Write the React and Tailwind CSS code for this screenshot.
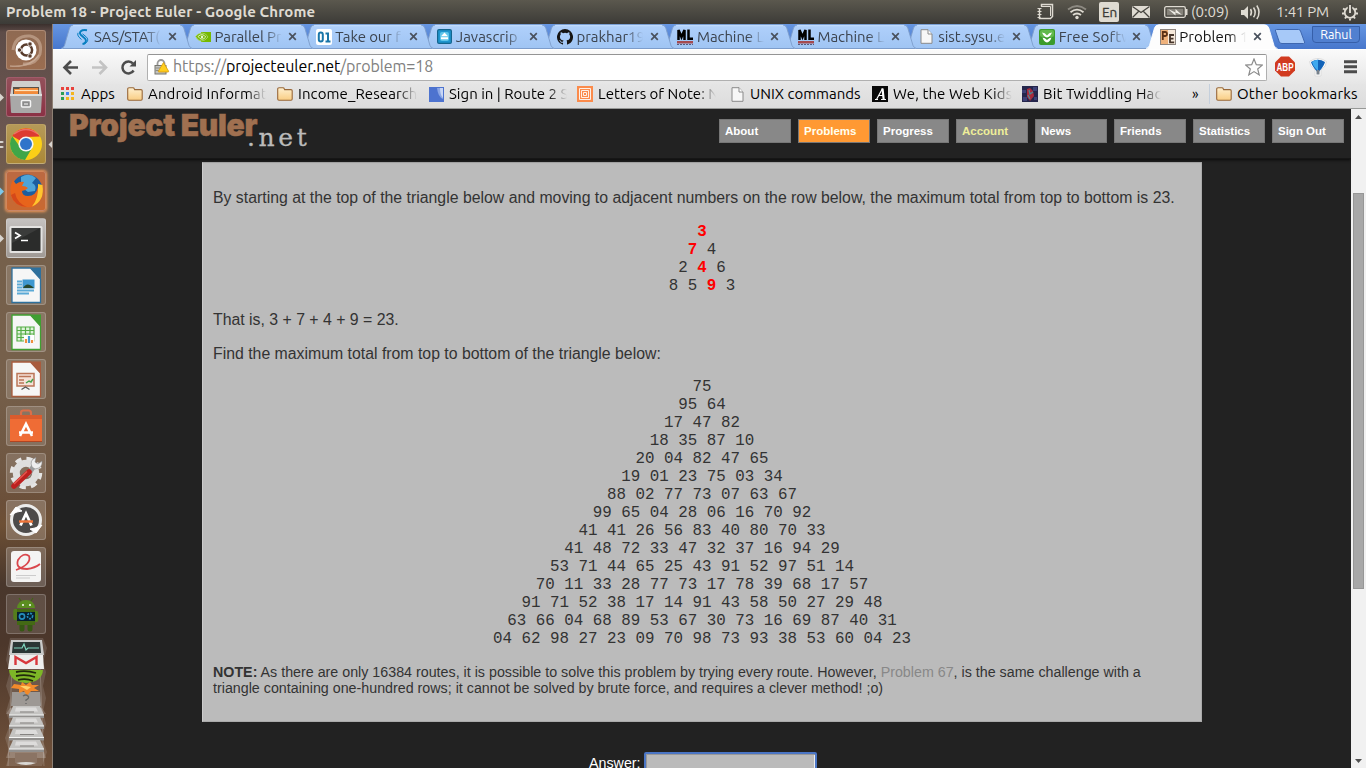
import React from "react";

const uiFont = "font-['Ubuntu','Noto_Sans',sans-serif]";

/* ---------- small drawings ---------- */

const Folder = () => (
  <svg width="16" height="14" viewBox="0 0 16 14" className="shrink-0">
    <defs>
      <linearGradient id="fold" x1="0" y1="0" x2="0" y2="1">
        <stop offset="0" stopColor="#fff0cf" />
        <stop offset="1" stopColor="#f9cd83" />
      </linearGradient>
    </defs>
    <path d="M.7 12V2Q.7 .8 2 .8h4Q7 .8 7.200 1.600L7.600 2.600H14Q15.200 2.600 15.200 3.800V12Q15.200 13.200 14 13.200H2Q.7 13.200 .7 12Z" fill="url(#fold)" stroke="#98683a" strokeWidth="1.100" />
  </svg>
);

const Doc = () => (
  <svg width="13" height="15" viewBox="0 0 13 15" className="shrink-0">
    <path d="M1 .7h7L12 5v9.300H1z" fill="#f7f7f7" stroke="#8a8a8a" />
    <path d="M8 .7V5h4" fill="#fff" stroke="#8a8a8a" />
  </svg>
);

const MlIcon = () => (
  <svg width="16" height="16" viewBox="0 0 16 16">
    <path d="M1.500 11V1l3 7 3-7v10M11.500 .5v9.300h4.500" fill="none" stroke="#000" strokeWidth="2.500" />
    <path d="M0 12h16v2.500H0z" fill="#a44a50" />
    <path d="M0 15.500h16" stroke="#555c80" strokeDasharray="2 1" />
  </svg>
);

const tabIcons = {
  sas: (
    <svg width="14" height="16" viewBox="0 0 14 16">
      <path d="M11 1.200C5 .2 2.500 3.300 5 6L9 9.600C11 12 9.500 14.500 6.500 15" fill="none" stroke="#087fc1" strokeWidth="1.900" />
      <path d="M6.500 4.800 10.500 8.200C13 10.500 11.500 14 7.500 15.200M5.500 10.500 3 8.200Q1 6 2 3.800" fill="none" stroke="#087fc1" strokeWidth="1" />
    </svg>
  ),
  nvidia: (
    <svg width="16" height="12" viewBox="0 0 16 12">
      <path d="M6 1h10v10H6z" fill="#76b900" />
      <path d="M.5 5.500Q3 2 7 2T13 6Q10 10 6.500 10T.5 5.500Z" fill="#76b900" stroke="#b7dc8a" strokeWidth=".7" />
      <path d="M3 5.500Q5 3.500 7.200 3.700T10.700 6Q9 8.200 7 8.200T3 5.500Z" fill="none" stroke="#e6f4d6" strokeWidth=".9" />
      <circle cx="7" cy="6" r="1.200" fill="#e6f4d6" />
    </svg>
  ),
  take: (
    <svg width="16" height="16" viewBox="0 0 16 16">
      <rect width="16" height="16" rx="2" fill="#fff" />
      <rect x="2.800" y="3.500" width="4" height="9" rx="2" fill="none" stroke="#1a76a8" strokeWidth="2" />
      <path d="M9.500 4.500h2.500v8M9.500 12.600h5" fill="none" stroke="#1a76a8" strokeWidth="2" />
    </svg>
  ),
  js: (
    <svg width="15" height="15" viewBox="0 0 15 15">
      <rect x=".6" y=".6" width="13.800" height="13.800" rx="1.500" fill="#1e95ce" stroke="#14658f" strokeWidth="1.200" />
      <rect x="3" y="3" width="9" height="9" rx="2" fill="#5ec4ea" />
      <path d="M7.500 3.600 11 7.200H4zM4 8.200h7v2H4z" fill="#fff" />
    </svg>
  ),
  github: (
    <svg width="16" height="16" viewBox="0 0 16 16">
      <path fill="#161514" d="M8 0a8 8 0 0 0-2.530 15.590c.4.070.55-.17.55-.38v-1.490c-2.230.48-2.690-.94-2.690-.94-.36-.92-.89-1.170-.89-1.170-.73-.5.050-.49.050-.49.810.060 1.230.83 1.230.83.72 1.230 1.880.87 2.330.66.070-.52.280-.87.510-1.070-1.780-.2-3.640-.89-3.640-3.950 0-.87.310-1.590.82-2.150-.08-.2-.36-1.020.08-2.120 0 0 .67-.21 2.200.82a7.600 7.600 0 0 1 4 0c1.530-1.040 2.200-.82 2.200-.82.44 1.100.16 1.920.08 2.120.51.56.82 1.270.82 2.150 0 3.070-1.870 3.750-3.650 3.950.29.25.54.73.54 1.480v2.190c0 .21.150.46.55.38A8 8 0 0 0 8 0Z" />
    </svg>
  ),
  ml: <MlIcon />,
  doc: <Doc />,
  free: (
    <svg width="16" height="16" viewBox="0 0 16 16">
      <rect width="16" height="16" rx="2" fill="#3b9b2c" />
      <rect x="1" y="1" width="14" height="7" rx="2" fill="#62b94d" />
      <path d="M3 3.500Q6 3.500 8 6.500 10 3.500 13 3.500 11 8 8 8.500 5 8 3 3.500ZM3.500 8.500Q6 8.700 8 11 10 8.700 12.500 8.500 11 13 8 13.500 5 13 3.500 8.500Z" fill="#fff" />
    </svg>
  ),
  pe: (
    <svg width="16" height="16" viewBox="0 0 16 16">
      <rect x=".5" y=".5" width="15" height="15" fill="#f7e9da" stroke="#8e8580" />
      <path d="M1 1h7v14H1z" fill="#efb27c" />
      <path d="M2.800 11V3h2.500Q7 3 7 5T5.300 7H3" fill="none" stroke="#5b3116" strokeWidth="1.800" />
      <path d="M14 6H10v7.300h4.200M10 9.600h3.500" fill="none" stroke="#46352b" strokeWidth="1.800" />
    </svg>
  ),
};

const tabs = [
  ["sas", "SAS/STAT(", "tracking-[-0.3px]"],
  ["nvidia", "Parallel Pr", "tracking-[-0.1px]"],
  ["take", "Take our f", "tracking-[-0.1px]"],
  ["js", "Javascrip", "tracking-[0px]"],
  ["github", "prakhar19", "tracking-[0px]"],
  ["ml", "Machine L", "tracking-[-0.1px]"],
  ["ml", "Machine L", "tracking-[-0.1px]"],
  ["doc", "sist.sysu.e", "tracking-[0px]"],
  ["free", "Free Softw", "tracking-[0.1px]"],
  ["pe", "Problem 1", "tracking-[0px]"],
];

const tabLayers = ["z-[10]", "z-[9]", "z-[8]", "z-[7]", "z-[6]", "z-[5]", "z-[4]", "z-[3]", "z-[2]", "z-[20]"];

function Tab({ icon, title, track, index }) {
  const active = index === 9;
  return (
    <div className={`relative h-[25px] w-[120.6px] shrink-0 ${tabLayers[index]}`}>
      <svg className="absolute top-0 left-0 overflow-visible" width="132" height="25" viewBox="0 0 132 25">
        <defs>
          <linearGradient id="tabg" x1="0" y1="0" x2="0" y2="1">
            <stop offset="0" stopColor="#b0d0fb" />
            <stop offset="1" stopColor="#9fc4f3" />
          </linearGradient>
        </defs>
        <path
          d="M0 25Q2.500 24 3.500 21.500L8.500 4Q9.700 .8 13 .8H118.500Q121.500 .8 122.800 4L128 21.500Q129 24 131.500 25Z"
          fill={active ? "#fdfdfd" : "url(#tabg)"}
        />
        <path
          d="M0 24.500Q2.500 24 3.500 21.500L8.500 4Q9.700 .8 13 .8H118.500Q121.500 .8 122.800 4L128 21.500Q129 24 131.500 24.500"
          fill="none"
          stroke={active ? "#fff" : "#7d9dcb"}
          strokeWidth=".9"
        />
        {!active && <path d="M12 1.700H119" stroke="#c8e0ff" />}
        {!active && <path d="M2 24.500H130" stroke="#7d9dcb" />}
      </svg>
      <div className="relative flex h-[25px] items-center pl-[13px]">
        <div className="flex w-[17px] shrink-0 justify-center">{tabIcons[icon]}</div>
        <div className={`ml-[3px] w-[67px] whitespace-nowrap text-[15px] leading-[24px] ${track} ${active ? "text-[#111]" : "text-[#3c444f]"} [mask-image:linear-gradient(to_right,black_75%,transparent)]`}>
          {title}
        </div>
        <svg width="9" height="9" viewBox="0 0 9 9" className="ml-[6.500px] shrink-0">
          <path d="M1.200 1.200l6.600 6.600M7.800 1.200l-6.600 6.600" stroke="#4a525e" strokeWidth="1.700" />
        </svg>
      </div>
    </div>
  );
}

/* ---------- system panel ---------- */

function TopBar() {
  return (
    <div className="flex h-6 shrink-0 items-center bg-linear-to-b from-[#5b584e] to-[#3c3b37] pl-[6px] text-[#dfdbd2]">
      <div className="text-[15px] leading-6 font-bold tracking-[0.1px] whitespace-nowrap">Problem 18 - Project Euler - Google Chrome</div>
      <div className="ml-auto flex h-6 items-center">
        <svg width="329" height="24" viewBox="1037 0 329 24" fill="none" stroke="#dfdbd2">
          <path d="M1039.500 8V18.500H1050.500M1041.500 6.500V4.500H1052.500V16.500L1050 19" strokeWidth="1.500" />
          <path d="M1037.500 8.500h4M1037.500 11.500h4M1037.500 14.500h4M1037.500 17.500h3M1041 6.500h9.500V16" strokeWidth="1" />
          <path d="M1068 9.500q9-7 18 0" stroke="#8d8a82" strokeWidth="1.800" />
          <path d="M1070.500 12.200q6.500-5 13 0M1073 15q4-3 8 0" strokeWidth="1.800" />
          <circle cx="1077" cy="17.500" r="1.700" fill="#dfdbd2" stroke="none" />
          <rect x="1099" y="2" width="20" height="20" rx="2" fill="#dfdbd2" stroke="none" />
          <rect x="1132" y="6" width="18" height="12" fill="#dfdbd2" stroke="none" />
          <path d="M1132.500 6.500l8.500 6 8.500-6M1132.500 17.500l6-6M1149.500 17.500l-6-6" stroke="#45433d" strokeWidth="1.300" />
          <rect x="1164.700" y="6.700" width="20.600" height="10.600" rx="1.500" strokeWidth="1.300" />
          <rect x="1166.800" y="8.700" width="16.500" height="6.600" fill="#86837b" stroke="none" />
          <path d="M1186.500 9v6" strokeWidth="2" />
          <path d="M1168 9l7.500 3.500V9L1182 15l-6.500-2.500v3z" fill="#efede6" stroke="none" />
          <path d="M1241 10h3l4-4v13l-4-4h-3z" fill="#dfdbd2" stroke="none" />
          <path d="M1250.500 9q2 3.300 0 6.700M1253.500 7.500q3.500 5 0 9.700M1256.800 5.500q4.500 7 0 13.500" strokeWidth="1.500" />
          <circle cx="1350" cy="12.500" r="5.300" strokeWidth="1.800" />
          <path d="M1343 8.500l2 1.200M1357 8.500l-2 1.200M1342 13.500h2.500M1358 13.500h-2.500M1345 18.500l1.500-2M1355 18.500l-1.500-2M1350 20.500v-2" strokeWidth="2" />
          <path d="M1350 3v8" stroke="#4b4942" strokeWidth="4.500" />
          <path d="M1350 5v8" strokeWidth="1.900" />
          <g stroke="none" fill="#dfdbd2" className="font-['Ubuntu','Noto_Sans',sans-serif]">
            <text x="1102" y="17" fontSize="13.500" fill="#3c3b37" stroke="#3c3b37" strokeWidth=".3">En</text>
            <text x="1191" y="17" fontSize="15" textLength="38">(0:09)</text>
            <text x="1276" y="17" fontSize="15" textLength="53">1:41 PM</text>
          </g>
        </svg>
      </div>
    </div>
  );
}

/* ---------- launcher ---------- */

const Office = ({ color, children }) => (
  <svg width="40" height="40" viewBox="0 0 40 40">
    <path d="M6 3h18.500l10 11v23.500H6z" fill="#f6f6f6" stroke={color} strokeWidth="1.300" />
    <path d="M24.500 2.500h10.500v11.500z" fill={color} />
    {children}
  </svg>
);

const launcherItems = [
  {
    tile: "bg-linear-to-b from-[#8f6a52] to-[#9b6d50]",
    art: (
      <svg width="40" height="40" viewBox="0 0 40 40">
        <path d="M7 20Q9 5 24 6 37 9 34 24 30 35 17 34" fill="none" stroke="#cdb09c" strokeWidth="3" opacity=".6" />
        <path d="M4 36Q24 38 33 25" fill="none" stroke="#cdb09c" strokeWidth="1.500" opacity=".7" />
        <circle cx="20" cy="20" r="10.500" fill="#fff" />
        <g stroke="#fff" strokeWidth=".8" fill="#583b2b">
          <circle cx="20.500" cy="20" r="5.600" fill="none" stroke="#583b2b" strokeWidth="2.500" />
          <circle cx="13.500" cy="20" r="2.200" />
          <circle cx="24" cy="14" r="2.200" />
          <circle cx="24" cy="26" r="2.200" />
        </g>
      </svg>
    ),
  },
  {
    tile: "bg-linear-to-b from-[#93505a] to-[#8b3145]",
    mark: "dot",
    art: (
      <svg width="40" height="40" viewBox="0 0 40 40">
        <path d="M6 5q0-1 1-1h26q1 0 1 1l2 14H4z" fill="#cfcfcd" />
        <path d="M7 10h26v8H7z" fill="#5b5149" />
        <path d="M8 12h5l1-1h18v6H8z" fill="#f28b3b" />
        <path d="M9 13.500h23" stroke="#ffe3bd" strokeWidth="1.200" />
        <path d="M4 17h32l-1 18q0 1-1 1H6q-1 0-1-1z" fill="#a9a9a8" />
        <path d="M4 17h32v2H4z" fill="#dededd" />
        <rect x="15.500" y="23.500" width="9" height="6.500" rx="1" fill="#8b8b8b" stroke="#f4f4f4" strokeWidth="1.500" />
        <path d="M18 27h4" stroke="#fff" />
      </svg>
    ),
  },
  {
    tile: "bg-linear-to-b from-[#b59a58] to-[#ab8836]",
    mark: "multi",
    art: (
      <svg width="40" height="40" viewBox="0 0 40 40">
        <circle cx="20" cy="20" r="16" fill="#fbcf17" />
        <path d="M20 20 6.200 12A16 16 0 0 1 33.800 12.500L20 13z" fill="#dd3b31" />
        <path d="M6.200 12A16 16 0 0 0 19 36l7-12-12-1z" fill="#3fa648" />
        <circle cx="20" cy="20" r="7.600" fill="#f5f5f5" />
        <circle cx="20" cy="20" r="6" fill="#2f74ca" />
        <path d="M8 10Q20 1 32 10" fill="none" stroke="#f4938a" strokeWidth="1.500" opacity=".6" />
      </svg>
    ),
  },
  {
    tile: "bg-linear-to-b from-[#bb6942] to-[#c96931] shadow-[0_0_3px_1px_#f59a5a]",
    mark: "blue",
    art: (
      <svg width="40" height="40" viewBox="0 0 40 40">
        <circle cx="21" cy="19" r="15.500" fill="#1c5d9f" />
        <path d="M15 6q8-5 15 1l-4 5q5 2 3 8l-7 1-7-5z" fill="#4ea4d8" />
        <path d="M36 14q3 17-10 22Q10 38 5 25 3 15 7 9l3 4q4-3 8-2l-2 4q4 0 6 2-3 3-6 3 0 5 6 5 8 0 10-9l3 2z" fill="#e8641b" />
        <path d="M36.500 14Q39 30 26 35.500 33 27 32 13z" fill="#ffc52f" />
        <path d="M5 24Q8 35 21 36 11 32 9 22z" fill="#d5481a" />
      </svg>
    ),
  },
  {
    tile: "bg-linear-to-b from-[#c5c2c0] to-[#a09a95]",
    mark: "dot",
    art: (
      <svg width="40" height="40" viewBox="0 0 40 40">
        <rect x="3.500" y="8" width="33" height="27" rx="1.500" fill="#e4e3e1" />
        <rect x="5.500" y="10" width="29" height="23" fill="#2b2c2b" />
        <path d="M6 10h28L6 25z" fill="#3b3c3b" />
        <path d="M9 14.500l5 3-5 3M15 22.500h7" fill="none" stroke="#fff" strokeWidth="1.700" />
      </svg>
    ),
  },
  {
    tile: "bg-white/15",
    art: (
      <Office color="#2e709d">
        <rect x="16.500" y="14.500" width="12" height="9" fill="#3f98d0" />
        <path d="M17 23q4-7 11 0z" fill="#29482c" />
        <path d="M11 16.500h5M11 19.500h5M11 22.500h5M11 25.500h17M11 28.500h12" stroke="#5ba9d6" strokeWidth="1.800" />
      </Office>
    ),
  },
  {
    tile: "bg-white/15",
    art: (
      <Office color="#3f9f31">
        <path d="M11 15h17v14H11z" fill="#dff2db" />
        <path d="M11 15h17v14H11zM11 18.500h17M11 22h17M11 25.500h17M15 15v14M19.500 15v14M24 15v14" fill="none" stroke="#54ad45" strokeWidth="1.200" />
        <rect x="18" y="23" width="10.500" height="8" fill="#fff" />
        <path d="M20 31v-4M26 31v-3" stroke="#ef8e3c" strokeWidth="2.200" />
        <path d="M23 31v-7" stroke="#459ad1" strokeWidth="2.200" />
      </Office>
    ),
  },
  {
    tile: "bg-white/15",
    art: (
      <Office color="#a85b3d">
        <rect x="11" y="14.500" width="17" height="12.500" fill="#f5e1d8" stroke="#bb7558" strokeWidth="1.500" />
        <path d="M13 17.500h12M13 21h5M13 24h5" stroke="#bb7558" strokeWidth="1.500" />
        <path d="M20 24l3-2 2 1 2-3" fill="none" stroke="#47a04c" strokeWidth="1.500" />
        <path d="M15.500 30.500l4-2.500 4 2.500" fill="none" stroke="#555" strokeWidth="1.300" />
      </Office>
    ),
  },
  {
    tile: "bg-white/15",
    art: (
      <svg width="40" height="40" viewBox="0 0 40 40">
        <path d="M15 12V7q0-2.500 2.500-2.500h5q2.500 0 2.500 2.500v5" fill="none" stroke="#d96f4a" strokeWidth="2.200" />
        <path d="M4 9h32v26H4z" fill="#ef6c35" />
        <path d="M4 9h32v4H4z" fill="#d95b2d" />
        <path d="M4 35.500h32" stroke="#b24420" />
        <path d="M14 30l6-12 6 12M13 26.500h14" fill="none" stroke="#fff" strokeWidth="2.600" />
      </svg>
    ),
  },
  {
    tile: "bg-white/15",
    art: (
      <svg width="40" height="40" viewBox="0 0 40 40">
        <circle cx="20" cy="20" r="14" fill="none" stroke="#e5e5e4" strokeWidth="4.500" strokeDasharray="6 5" />
        <circle cx="20" cy="20" r="9.700" fill="none" stroke="#dededd" strokeWidth="7" />
        <path d="M21 23 30 10" stroke="#9b9b9b" strokeWidth="5" />
        <path d="M26 14Q23 7 30 4.500L29 9l3 2 4-3q1 7-7 8z" fill="#eee" stroke="#888" strokeWidth=".6" />
        <path d="M8 33 23 19" stroke="#bd2120" strokeWidth="5.500" strokeLinecap="round" />
        <path d="M8 31 21 18.500" stroke="#e4574d" strokeWidth="1.500" />
      </svg>
    ),
  },
  {
    tile: "bg-white/20",
    art: (
      <svg width="40" height="40" viewBox="0 0 40 40">
        <circle cx="20" cy="20" r="14.500" fill="#4d4b4a" stroke="#ececeb" strokeWidth="3" />
        <path d="M4 15 10 7l6 4-5 1zM36 25l-6 8-6-4 5-1z" fill="#fff" stroke="#fff" />
        <path d="M14.500 25.500 20 13.500l5.500 12" fill="none" stroke="#fff" strokeWidth="2.800" />
        <path d="M13 21.500h14" stroke="#ee7439" strokeWidth="2.400" />
      </svg>
    ),
  },
  {
    tile: "bg-white/20",
    art: (
      <svg width="40" height="40" viewBox="0 0 40 40">
        <rect x="5" y="4" width="30" height="31" rx="3" fill="#f4f4f3" />
        <path d="M10 23Q26 17 23 9 17 5 12 13 9 22 21 22 29 21 34 17" fill="none" stroke="#d9474c" strokeWidth="1.800" />
        <path d="M10 28.500h20M10 31h14" stroke="#ccc" strokeWidth="1" />
      </svg>
    ),
  },
  {
    tile: "bg-white/12",
    art: (
      <svg width="40" height="40" viewBox="0 0 40 40">
        <path d="M16 30v5M24 30v5" stroke="#365813" strokeWidth="5" strokeLinecap="round" />
        <path d="M9.500 17v7M30 19v7" stroke="#547e1c" strokeWidth="4.500" strokeLinecap="round" />
        <path d="M11 15h18v16H11z" fill="#436914" />
        <path d="M11 14Q12 6 20 6t9 8z" fill="#5b8e20" />
        <path d="M15 7l-2-3M25 7l2-3" stroke="#426515" strokeWidth="1.200" />
        <circle cx="17" cy="11" r="1" fill="#fff" />
        <circle cx="24" cy="11" r="1" fill="#fff" />
        <path d="M11 18h18v9H11z" fill="#071f2f" />
        <circle cx="16" cy="22.500" r="2.600" fill="none" stroke="#258dbd" strokeWidth="1.600" />
        <circle cx="24" cy="22" r="2.600" fill="none" stroke="#258dbd" strokeWidth="1.600" strokeDasharray="2 1" />
      </svg>
    ),
  },
];

function Launcher() {
  return (
    <div className="relative w-[53px] shrink-0 overflow-hidden border-r border-[#8e8074] bg-[linear-gradient(180deg,#3a302d_0px,#5e4c48_8px,#6a5650_100px,#75604b_180px,#76604b_350px,#6f5742_440px,#6b4f39_480px,#6e5035_500px,#49372c_560px,#4c372b_620px,#71523b_744px)]">
      <div className="flex flex-col gap-[7px] pt-[6px] pl-[6px]">
        {launcherItems.map((it, i) => (
          <div key={i} className={`relative h-10 w-10 rounded-[3px] border border-white/20 ${it.tile}`}>
            <div className="-m-px">{it.art}</div>
            {it.mark && (
              <svg className="absolute top-[14px] -left-[7px]" width="5" height="11" viewBox="0 0 5 11">
                {it.mark === "multi" ? (
                  <path d="M0 2h2.500l1.500 1-1.500 1H0zM0 7h2.500L4 8 2.500 9H0z" fill="#d9d5cf" />
                ) : (
                  <path d="M0 1.500 4 5.500 0 9.500z" fill={it.mark === "blue" ? "#7cc7ea" : "#d9d5cf"} />
                )}
              </svg>
            )}
            {it.mark === "multi" && (
              <svg className="absolute top-[14px] left-[41px]" width="5" height="11" viewBox="0 0 5 11">
                <path d="M4.500 1.500 .5 5.500l4 4z" fill="#d9d5cf" />
              </svg>
            )}
          </div>
        ))}
      </div>
      <svg width="52" height="132" viewBox="0 634 52 132" className="block">
        <path d="M10 638h33l4 10-4 14 3 10-3 14 3 12-3 14 3 12-4 14 5 14-5 14H6l4-12-5-16 5-14-4-12 4-14-4-12 4-14-4-12z" fill="#fff" opacity=".13" />
        <path d="M8 767 13 640M44 767 39 640" stroke="#fff" opacity=".2" />
        <path d="M6 758H46L42 746H10zM6 714H46L42 708H10z" fill="#fff" opacity=".2" />
        <path d="M11 640h31l2 15H9z" fill="#c9cac9" />
        <path d="M13 642h27l1 11H12z" fill="#2a3534" />
        <path d="M14 648h8l2-4 2 6 2-2h11" fill="none" stroke="#7ed5bd" strokeWidth="1.200" />
        <path d="M10 655h33l1 14H8z" fill="#eeeeed" />
        <path d="M15.500 665v-8l10.500 6 10.500-6v8" fill="none" stroke="#d8383d" strokeWidth="2.400" />
        <path d="M9 670h34q-1 12-17 13-16-1-17-13z" fill="#7db727" />
        <path d="M16 672q10-2 20 1M16 676q10-2 19 1M18 680q8-2 15 1" fill="none" stroke="#202a0b" strokeWidth="1.800" />
        <path d="M12 692h28l1 14H11z" fill="#9d9894" />
        <path d="M14 684l7 1 1-3 4 3 4-3 2 3 7 0-5 3 5 3-8 0-4 5-3-5-5 2 0-4-8-1z" fill="#f28a2b" />
        <path d="M20 686l6 0 5 1-4 3z" fill="#ffd16b" />
        <path d="M23 696q3-2 5 0t-2 4v1M26 703v1" fill="none" stroke="#666" strokeWidth="1.300" />
        {[706, 717, 728.5, 740].map((y) => (
          <g key={y} transform={`translate(0 ${y})`}>
            <path d="M13 0h27l4 9H9z" fill="#c4c3c1" />
            <path d="M16 1.500h20l2 4H15z" fill="#dddcdb" />
            <path d="M20 6h14" stroke="#858381" />
            <path d="M9 9h35v3H9z" fill="#92908e" />
            <path d="M9 9h35" stroke="#f4f4f3" />
          </g>
        ))}
        <path d="M15 753h22v10H15z" fill="#8b7464" />
        <path d="M16 763q10-2 20 0-10 4-20 0z" fill="#dad8d4" />
      </svg>
    </div>
  );
}

/* ---------- browser chrome ---------- */

const fade = "[mask-image:linear-gradient(to_right,black_84%,transparent)]";

const bookmarks = [
  { w: "w-[67px]", text: "Apps", icon: "apps", tw: "w-[38px]", track: "tracking-[0px]" },
  { w: "w-[150px]", text: "Android Informat", icon: "folder", tw: "w-[118px]", fade: true, track: "tracking-[0.150px]" },
  { w: "w-[151px]", text: "Income_Research", icon: "folder", tw: "w-[119px]", fade: true, track: "tracking-[0.1px]" },
  { w: "w-[149px]", text: "Sign in | Route 2 S", icon: "route", tw: "w-[118px]", fade: true, track: "tracking-[0px]" },
  { w: "w-[152px]", text: "Letters of Note: N", icon: "letters", tw: "w-[118px]", fade: true, track: "tracking-[0px]" },
  { w: "w-[143px]", text: "UNIX commands", icon: "doc", tw: "w-[116px]", track: "tracking-[0px]" },
  { w: "w-[150px]", text: "We, the Web Kids", icon: "web", tw: "w-[119px]", fade: true, track: "tracking-[0.1px]" },
  { w: "w-[142px]", text: "Bit Twiddling Hac", icon: "bit", tw: "w-[118px]", fade: true, track: "tracking-[0.150px]" },
];

const markIcons = {
  apps: (
    <svg width="14" height="14" viewBox="0 0 14 14">
      <path d="M0 0h3v3H0zM5 0h3v3H5zM10 0h3v3h-3z" fill="#e8413b" />
      <path d="M0 5h3v3H0zM0 10h3v3H0z" fill="#2b9e55" />
      <path d="M5 5h3v3H5z" fill="#3e83ef" />
      <path d="M10 5h3v3h-3zM5 10h3v3H5zM10 10h3v3h-3z" fill="#f5b51d" />
    </svg>
  ),
  folder: <Folder />,
  route: (
    <svg width="15" height="15" viewBox="0 0 15 15" className="shrink-0">
      <rect width="15" height="15" fill="#4d73cf" />
      <path d="M8 1h6v11q-5-2-6-11z" fill="#8ba7e6" />
      <path d="M11 1h3v10q-3-3-3-10z" fill="#c9d7f5" />
    </svg>
  ),
  letters: (
    <svg width="16" height="16" viewBox="0 0 16 16" className="shrink-0">
      <rect width="16" height="16" fill="#fb8b4b" />
      <path d="M2.500 2.500h11v11h-11zM4.500 4.500h7v7h-7zM6.500 6.500h3v3h-3z" fill="none" stroke="#fff0e5" />
    </svg>
  ),
  doc: <Doc />,
  web: (
    <svg width="16" height="16" viewBox="0 0 16 16" className="shrink-0">
      <rect width="16" height="16" fill="#0a0a0a" />
      <path d="M3 13.500h3M4.500 13.500 10.500 2.500M6.500 9.500h5M9 13.500h5" stroke="#fff" strokeWidth="1.200" />
      <path d="M10.500 2.500l1.200 11" stroke="#fff" strokeWidth="2.200" />
    </svg>
  ),
  bit: (
    <svg width="16" height="16" viewBox="0 0 16 16" className="shrink-0">
      <rect width="16" height="16" fill="#25264c" />
      <path d="M0 4h4v3H0zM11 1h4v4h-4zM1 11h4v4H1zM12 11h3v3h-3z" fill="#3d4177" />
      <path d="M5 3l3-1 3 3 1 5-4 5-3-4z" fill="#a82b3c" />
      <path d="M7 4l1 4 3-2M6 9l2 4" stroke="#4b8897" strokeWidth="1.300" fill="none" />
    </svg>
  ),
};

function BrowserChrome() {
  return (
    <div className="flex h-[85px] shrink-0 flex-col">
      <div className="flex h-[25px] bg-linear-to-b from-[#6696e2] to-[#4777cc] pl-[8px]">
        {tabs.map(([icon, title, track], i) => (
          <Tab key={i} icon={icon} title={title} track={track} index={i} />
        ))}
        <svg width="44" height="25" viewBox="0 0 44 25" className="shrink-0">
          <path d="M8.500 7Q8 5.500 9.500 5.500H31.500Q33 5.500 33.500 7L37.500 18Q38 19.500 36.500 19.500H15Q13 19.500 12.300 18Z" fill="#a7c9f8" stroke="#3e67b0" />
        </svg>
        <div className="mt-[2px] ml-[1px] h-[17px] w-[48px] shrink-0 rounded-b-[4px] border border-[#365fa9] bg-[#5180d0] text-center text-[12.5px] leading-[15px] tracking-[-0.1px] text-white">
          Rahul
        </div>
      </div>
      <div className="flex h-[35px] items-center border-t border-[#fff] bg-linear-to-b from-[#fafafa] to-[#e6e6e6] pl-[8px]">
        <svg width="86" height="26" viewBox="61 53 86 26" className="shrink-0" fill="none">
          <path d="M78 66.500H65M71 60l-6.500 6.500L71 73" stroke="#4c4c4c" strokeWidth="2.600" />
          <path d="M92 66.500h13M99.500 60l6.500 6.500-6.500 6.500" stroke="#c3c3c3" strokeWidth="2.600" />
          <path d="M133 62.500a6 6 0 1 0 .6 7" stroke="#4c4c4c" strokeWidth="2.500" />
          <path d="M136 59v6.500h-6.500z" fill="#4c4c4c" />
        </svg>
        <div className="flex h-[27px] w-[1120px] shrink-0 items-center rounded-[2px] border border-[#b0b0b0] border-t-[#949494] bg-white pl-[6px] pr-[3px]">
          <svg width="16" height="16" viewBox="0 0 16 16" className="shrink-0">
            <path d="M3.500 8V4.500a3.500 3.500 0 0 1 7 0V7" fill="none" stroke="#9a9a9a" strokeWidth="1.800" />
            <rect x="1" y="6.500" width="11" height="8.500" fill="#c2c2bf" stroke="#77776f" />
            <path d="M1.500 9h8M1.500 11.500h8" stroke="#8d8d86" />
            <path d="M9.500 3.500 14.500 12Q15 13 14 13H4.800Q4 13 4.500 12Z" fill="#ffce1f" stroke="#d59a0c" strokeWidth=".8" />
          </svg>
          <div className="ml-[3px] text-[16px] leading-[24px] tracking-[-0.09px] whitespace-nowrap text-[#808080] -mt-[2px]">
            https://<span className="text-black">projecteuler.net</span>/problem=18
          </div>
          <svg width="18" height="18" viewBox="0 0 18 18" className="ml-auto">
            <path d="M9 1l2.300 5.700 6 .4-4.600 3.900 1.500 5.900L9 13.600 3.800 16.900 5.300 11 .7 7.100l6-.4z" fill="#fdfdfd" stroke="#8a8a8a" strokeWidth="1.200" />
          </svg>
        </div>
        <svg width="99" height="30" viewBox="1267 51 99 30" className="shrink-0">
          <path d="M1281 55.500h8l6 6v8l-6 6h-8l-6-6v-8z" fill="#d13a1f" />
          <text x="1276.500" y="69.500" fontSize="11.500" textLength="17" lengthAdjust="spacingAndGlyphs" fontWeight="bold" fill="#fff" className="font-['Liberation_Sans',sans-serif]">ABP</text>
          <path d="M1309.500 60.500Q1318 54.500 1326.500 60.500q0 5-5.500 8v6.500h-6v-6.500q-5.500-3-5.500-8z" fill="#fff" stroke="#dcdcdc" />
          <path d="M1311 61q7-4.500 14 0-1 4-5.500 9l-1.500 2-1.500-2q-4.500-5-5.500-9z" fill="#1263b8" />
          <path d="M1312 61q3-2.200 6-2.200l0 11q-4.500-3.500-6-8.800z" fill="#3fa9ee" />
          <path d="M1316.500 69h3v4.500h-3z" fill="#77808a" />
          <path d="M1344 60.800h13M1344 65.800h13M1344 70.800h13" stroke="#4c4c4c" strokeWidth="3" />
        </svg>
      </div>
      <div className="flex h-[25px] items-center border-b border-[#979997] bg-linear-to-b from-[#e5e5e5] to-[#dcdcdc] pb-[4px] pl-[8px] text-[15px] leading-[20px] text-black">
        {bookmarks.map((b, i) => (
          <div key={i} className={`flex shrink-0 items-center ${b.w}`}>
            <div className="flex w-[14px] shrink-0 justify-center">{markIcons[b.icon]}</div>
            <div className={`ml-[6px] whitespace-nowrap ${b.tw} ${b.track} ${b.fade ? fade : ""}`}>{b.text}</div>
          </div>
        ))}
        <span className="ml-auto w-[17px] shrink-0 text-[14px]">»</span>
        <span className="mr-[6px] h-[20px] w-px shrink-0 bg-[#c4cfdc]" />
        <Folder />
        <span className="ml-[5px] w-[129px] shrink-0 whitespace-nowrap tracking-[0.2px]">Other bookmarks</span>
      </div>
    </div>
  );
}

/* ---------- page ---------- */

const navItems = ["About", "Problems", "Progress", "Account", "News", "Friends", "Statistics", "Sign Out"];

const triangle = `75
95 64
17 47 82
18 35 87 10
20 04 82 47 65
19 01 23 75 03 34
88 02 77 73 07 63 67
99 65 04 28 06 16 70 92
41 41 26 56 83 40 80 70 33
41 48 72 33 47 32 37 16 94 29
53 71 44 65 25 43 91 52 97 51 14
70 11 33 28 77 73 17 78 39 68 17 57
91 71 52 38 17 14 91 43 58 50 27 29 48
63 66 04 68 89 53 67 30 73 16 69 87 40 31
04 62 98 27 23 09 70 98 73 93 38 53 60 04 23`;

const Hot = ({ children }) => <b className="text-[#ff0000]">{children}</b>;

function Page() {
  return (
    <div className="flex min-h-0 flex-1 overflow-hidden bg-[#222] font-['Liberation_Sans',Arial,sans-serif]">
      <div className="flex min-w-0 flex-1 flex-col overflow-hidden">
        <header className="relative flex h-[50px] shrink-0 border-b border-[#161616] pr-[7px] shadow-[0_1px_3px_#0a0a0a]">
          <div className="flex pl-[16px] whitespace-nowrap">
            <span className="w-[178px] font-['Inter','Liberation_Sans',sans-serif] text-[30px] leading-[33px] font-black tracking-[-0.250px] text-[#a07050] [-webkit-text-stroke:0.5px_#a07050]">Project Euler</span>
            <span className="pt-[13px] font-['DejaVu_Serif',serif] text-[25px] leading-[31px] tracking-[3.600px] text-[#bbb] [-webkit-text-stroke:0.3px_#bbb]">.net</span>
          </div>
          <nav className="ml-auto flex gap-[7px] pt-[10px]">
            {navItems.map((n) => (
              <div
                key={n}
                className={`h-[24px] w-[72px] border border-[#777] pl-[5px] text-[11.5px] leading-[23px] font-bold ${n === "Problems" ? "bg-[#ff9933] text-[#ffffee]" : n === "Account" ? "bg-[#888] text-[#eeee99]" : "bg-[#888] text-white"}`}
              >
                {n}
              </div>
            ))}
          </nav>
        </header>
        <main className="mt-[3px] ml-[149px] h-[560px] w-[1000px] shrink-0 border border-[#aaa] border-l-[#ccc] bg-[#bbb] px-[10px] text-[15.84px] leading-[18px] text-[#333]">
          <p className="mt-[26px] whitespace-nowrap">By starting at the top of the triangle below and moving to adjacent numbers on the row below, the maximum total from top to bottom is 23.</p>
          <div className="mt-[16px] text-center font-['Liberation_Mono','Courier_New',monospace] whitespace-pre">
            <Hot>3</Hot>{"\n"}<Hot>7</Hot> 4{"\n"}2 <Hot>4</Hot> 6{"\n"}8 5 <Hot>9</Hot> 3
          </div>
          <p className="mt-[16px]">That is, 3 + 7 + 4 + 9 = 23.</p>
          <p className="mt-[16px]">Find the maximum total from top to bottom of the triangle below:</p>
          <div className="mt-[15px] text-center font-['Liberation_Mono','Courier_New',monospace] whitespace-pre">{triangle}</div>
          <p className="mt-[16px] text-[14.270px] leading-[16px] whitespace-nowrap">
            <b>NOTE:</b> As there are only 16384 routes, it is possible to solve this problem by trying every route. However, <span className="text-[#888]">Problem 67</span>, is the same challenge with a
            <br />
            triangle containing one-hundred rows; it cannot be solved by brute force, and requires a clever method! ;o)
          </p>
        </main>
        <div className="mt-[30px] ml-[536px] flex shrink-0 text-[14.270px] leading-[20px] text-white">
          <span className="mt-px w-[55px] whitespace-nowrap">Answer:</span>
          <div className="h-[24px] w-[173px] rounded-[2px] border-2 border-[#4b76c5] bg-[#bbb] shadow-[inset_1px_1px_0_#999,inset_-1px_0_0_#eee]" />
        </div>
      </div>
      <div className="flex w-[15px] shrink-0 flex-col items-center bg-[#f1f1f1]">
        <svg width="15" height="84" viewBox="0 0 15 84" className="shrink-0">
          <path d="M4 10 7.500 6 11 10z" fill="#505050" />
        </svg>
        <div className="ml-[-1px] h-[396px] w-[11px] shrink-0 border border-[#979797] bg-[#a8a8a8]" />
        <svg width="15" height="17" viewBox="0 0 15 17" className="mt-auto mb-[-1px] shrink-0">
          <path d="M4 7l3.500 4L11 7z" fill="#505050" />
        </svg>
      </div>
    </div>
  );
}

export default function App() {
  return (
    <div className={`flex h-[768px] w-[1366px] flex-col overflow-hidden bg-[#222] ${uiFont}`}>
      <TopBar />
      <div className="flex min-h-0 flex-1">
        <Launcher />
        <div className="flex min-w-0 flex-1 flex-col">
          <BrowserChrome />
          <Page />
        </div>
      </div>
    </div>
  );
}
